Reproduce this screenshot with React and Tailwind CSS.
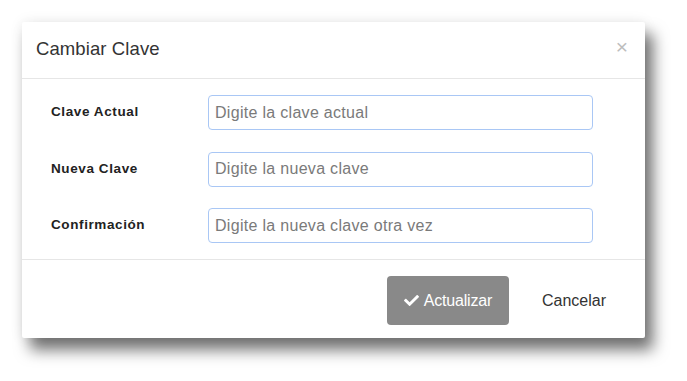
import React from 'react';
import { FaCheck } from 'react-icons/fa';

const campos = [
  { label: 'Clave Actual', placeholder: 'Digite la clave actual' },
  { label: 'Nueva Clave', placeholder: 'Digite la nueva clave' },
  { label: 'Confirmación', placeholder: 'Digite la nueva clave otra vez' },
];

export default function App() {
  return (
    <div className="w-[687px] h-[381px] bg-white pt-[22px] pl-[22px] font-['Liberation_Sans',Arial,sans-serif]">
      {/* modal */}
      <div className="w-[623px] h-[316px] bg-white flex flex-col rounded-[2px] shadow-[8px_12px_15px_rgba(0,0,0,0.55),0_0_14px_rgba(0,0,0,0.08)]">
        {/* header */}
        <div className="h-[57px] border-b border-[#e6e6e6] flex items-center justify-between pl-[14px] pr-[17px]">
          <h4 className="text-[18.5px] text-[#333] tracking-[0.1px] -mt-[2px]">Cambiar Clave</h4>
          <span className="text-[21px] leading-none text-[#bdbdbd] -mt-[8px]">×</span>
        </div>

        {/* body */}
        <div className="flex flex-col gap-[21.5px] pt-[16px] pb-[16px] pl-[29px]">
          {campos.map((c) => (
            <div key={c.label} className="flex items-center">
              <label className="w-[157px] text-[13.5px] font-bold text-[#222] tracking-[0.6px]">{c.label}</label>
              <input
                type="text"
                placeholder={c.placeholder}
                className="w-[385px] h-[35px] px-[6px] rounded-[4px] border border-[#a9c7f5] text-[16px] tracking-[0.3px] text-[#333] placeholder:text-[#7a7a7a] outline-none"
              />
            </div>
          ))}
        </div>

        {/* footer */}
        <div className="flex-1 border-t border-[#e6e6e6] flex items-start justify-end pt-[16px] pr-[27px]">
          <button className="w-[122px] h-[49px] rounded-[4px] bg-[#898989] text-white text-[16px] flex items-center justify-center gap-[5px] tracking-[-0.2px]">
            <FaCheck className="w-[15px] h-[15px]" />
            Actualizar
          </button>
          <button className="h-[49px] ml-[21px] px-[12px] text-[16px] text-[#333]">Cancelar</button>
        </div>
      </div>
    </div>
  );
}
